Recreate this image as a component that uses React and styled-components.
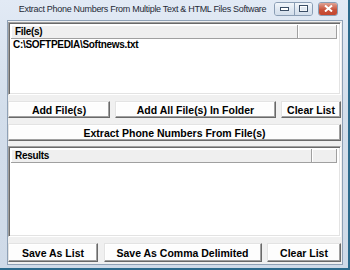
import React from "react";
import styled, { createGlobalStyle } from "styled-components";

const Global = createGlobalStyle`
  html, body {
    margin: 0;
    padding: 0;
    width: 350px;
    height: 270px;
    overflow: hidden;
    background: #fff;
  }
`;

const Window = styled.div`
  width: 350px;
  height: 270px;
  box-sizing: border-box;
  display: flex;
  flex-direction: column;
  padding: 0 5px 3px 7px;
  background: linear-gradient(#e2eaf5, #d3deeb 40%, #cfdae8);
  border-right: 2px solid #2c6a8c;
  border-bottom: 2px solid #2c6a8c;
`;

const TitleBar = styled.div`
  height: 20px;
  display: flex;
  align-items: center;
  flex-shrink: 0;
`;

const Title = styled.div`
  flex: 1;
  min-width: 0;
  white-space: nowrap;
  text-align: center;
  font-family: "Liberation Sans", Arial, sans-serif;
  font-size: 9px;
  letter-spacing: -0.3px;
  color: #1f2a36;
  padding-left: 4px;
  padding-bottom: 2px;
`;

const CaptionGroup = styled.div`
  display: flex;
  height: 12px;
  margin-bottom: 3px;
  border: 1px solid #8a9db4;
  border-radius: 3px;
  overflow: hidden;
  margin-right: 5px;
`;

const CaptionButton = styled.div`
  width: ${(p) => p.$w}px;
  height: 100%;
  display: flex;
  align-items: center;
  justify-content: center;
  background: ${(p) =>
    p.$close
      ? "linear-gradient(#e0a294, #c9533c 55%, #c4452d)"
      : "linear-gradient(#f2f6fb, #e0e8f2 50%, #d3deeb)"};
  & + & {
    border-left: 1px solid #8a9db4;
  }
`;

const Client = styled.div`
  flex: 1;
  display: flex;
  flex-direction: column;
  background: #f0f0f0;
  border: 1px solid #8fa1b6;
  padding: 1px 1px 2px 0;
  min-height: 0;
`;

const ListBox = styled.div`
  height: ${(p) => (p.$h ? `${p.$h}px` : "auto")};
  flex: ${(p) => (p.$grow ? 1 : "none")};
  margin-top: ${(p) => p.$top || 0}px;
  box-sizing: border-box;
  background: #fff;
  border: 1px solid;
  border-color: #a0a0a0 #fff #fff #a0a0a0;
  box-shadow: inset 1px 1px #696969, inset -1px -1px #e3e3e3;
  padding: 2px 2px 1px 2px;
  display: flex;
  flex-direction: column;
  font-family: "Liberation Sans", Arial, sans-serif;
  font-weight: bold;
  font-size: 10px;
  letter-spacing: -0.3px;
  color: #000;
`;

const HeaderRow = styled.div`
  display: grid;
  grid-template-columns: 1fr ${(p) => p.$second}px;
  height: 14px;
  margin-right: 1px;
`;

const HeaderCell = styled.div`
  box-sizing: border-box;
  background: #efefef;
  border-bottom: 1px solid #a0a0a0;
  border-right: 1px solid #a0a0a0;
  box-shadow: inset 1px 1px #fff;
  padding-left: 4px;
  line-height: 13px;
`;

const Item = styled.div`
  padding-left: 2px;
  line-height: 12px;
`;

const ButtonRow = styled.div`
  display: grid;
  grid-template-columns: ${(p) => p.$cols};
  justify-content: space-between;
  margin-top: ${(p) => p.$top}px;
  height: ${(p) => p.$h}px;
  flex-shrink: 0;
`;

const Button = styled.button`
  box-sizing: border-box;
  height: 100%;
  margin: 0;
  padding: 0;
  background: #fdfdfd;
  border: 1px solid;
  border-color: #e3e3e3 #696969 #696969 #e3e3e3;
  box-shadow: inset -1px -1px #a0a0a0, inset 1px 1px #fff;
  font-family: "Liberation Sans", Arial, sans-serif;
  font-weight: bold;
  font-size: 10.5px;
  color: #000;
`;

const App = () => {
  return (
    <>
      <Global />
      <Window>
        <TitleBar>
          <Title>Extract Phone Numbers From Multiple Text &amp; HTML Files Software</Title>
          <CaptionGroup>
            <CaptionButton $w={19}>
              <svg width="9" height="4" viewBox="0 0 9 4">
                <rect x="0.5" y="0.5" width="8" height="3" fill="#fff" stroke="#3b4e66" />
              </svg>
            </CaptionButton>
            <CaptionButton $w={17}>
              <svg width="9" height="7" viewBox="0 0 9 7">
                <rect x="0.5" y="0.5" width="8" height="6" fill="#fff" stroke="#3b4e66" />
                <rect x="1.5" y="2" width="6" height="3.5" fill="#dfe7f0" />
              </svg>
            </CaptionButton>
          </CaptionGroup>
          <CaptionGroup>
            <CaptionButton $w={18} $close>
              <svg width="9" height="7" viewBox="0 0 9 7">
                <path d="M1 0.5 L8 6.5 M8 0.5 L1 6.5" stroke="#fff" strokeWidth="2" />
              </svg>
            </CaptionButton>
          </CaptionGroup>
        </TitleBar>
        <Client>
          <ListBox $h={73}>
            <HeaderRow $second={39}>
              <HeaderCell>File(s)</HeaderCell>
              <HeaderCell />
            </HeaderRow>
            <Item>C:\SOFTPEDIA\Softnews.txt</Item>
          </ListBox>
          <ButtonRow $cols="102px 161px 60px" $top={6} $h={17}>
            <Button>Add File(s)</Button>
            <Button>Add All File(s) In Folder</Button>
            <Button>Clear List</Button>
          </ButtonRow>
          <ButtonRow $cols="1fr" $top={6} $h={17}>
            <Button>Extract Phone Numbers From File(s)</Button>
          </ButtonRow>
          <ListBox $grow $top={5}>
            <HeaderRow $second={25}>
              <HeaderCell>Results</HeaderCell>
              <HeaderCell />
            </HeaderRow>
          </ListBox>
          <ButtonRow $cols="90px 158px 74px" $top={6} $h={19}>
            <Button>Save As List</Button>
            <Button>Save As Comma Delimited</Button>
            <Button>Clear List</Button>
          </ButtonRow>
        </Client>
      </Window>
    </>
  );
};

export default App;
